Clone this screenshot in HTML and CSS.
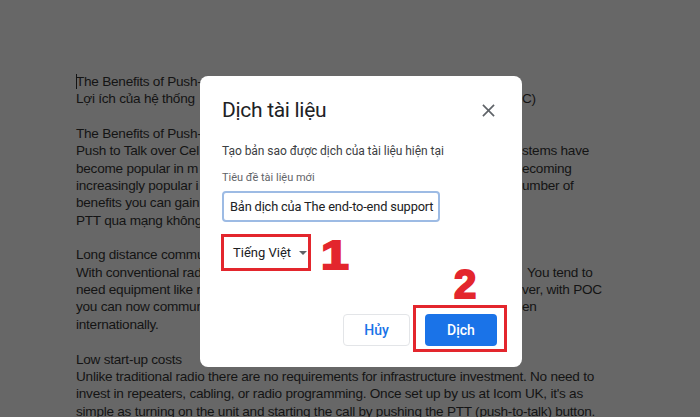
FILE: index.html
```html
<!DOCTYPE html>
<html lang="vi">
<head>
<meta charset="utf-8">
<title>Dịch tài liệu</title>
<link rel="stylesheet" href="styles.css">
</head>
<body>
<div class="page">
  <div class="doc">
    <div class="line"><span class="lt"><span class="caret"></span>The Benefits of Push-</span></div>
    <div class="line"><span class="lt">Lợi ích của hệ thống</span><span class="rt">C)</span></div>
    <div class="line"></div>
    <div class="line"><span class="lt">The Benefits of Push-</span></div>
    <div class="line"><span class="lt">Push to Talk over Cel</span><span class="rt">stems have</span></div>
    <div class="line"><span class="lt">become popular in m</span><span class="rt">ecoming</span></div>
    <div class="line"><span class="lt">increasingly popular i</span><span class="rt">umber of</span></div>
    <div class="line"><span class="lt">benefits you can gain</span></div>
    <div class="line"><span class="lt">PTT qua mạng không</span></div>
    <div class="line"></div>
    <div class="line"><span class="lt">Long distance commu</span></div>
    <div class="line"><span class="lt">With conventional rad</span><span class="rt"><span class="sp5">You tend to</span></span></div>
    <div class="line"><span class="lt">need equipment like r</span><span class="rt">ver, with POC</span></div>
    <div class="line"><span class="lt">you can now commun</span><span class="rt">en</span></div>
    <div class="line"><span class="lt">internationally.</span></div>
    <div class="line"></div>
    <div class="line">Low start-up costs</div>
    <div class="line">Unlike traditional radio there are no requirements for infrastructure investment. No need to</div>
    <div class="line">invest in repeaters, cabling, or radio programming. Once set up by us at Icom UK, it's as</div>
    <div class="line">simple as turning on the unit and starting the call by pushing the PTT (push-to-talk) button.</div>
  </div>

  <div class="dialog">
    <div class="dlg-head">
      <h1 class="dlg-title">Dịch tài liệu</h1>
      <svg class="close" viewBox="0 0 14 14" width="13" height="13"><path d="M1 1 L13 13 M13 1 L1 13" stroke="#5f6368" stroke-width="1.8" fill="none"/></svg>
    </div>
    <p class="dlg-sub">Tạo bản sao được dịch của tài liệu hiện tại</p>
    <p class="dlg-label">Tiêu đề tài liệu mới</p>
    <div class="input">Bản dịch của The end-to-end support</div>
    <div class="lang">Tiếng Việt <span class="caret-down"></span></div>
    <div class="actions">
      <button class="btn btn-cancel">Hủy</button>
      <button class="btn btn-ok">Dịch</button>
    </div>
  </div>

  <div class="mark box1"></div>
  <div class="num num1">1</div>
  <div class="num num2">2</div>
  <div class="mark box2"></div>
</div>
</body>
</html>
```

FILE: styles.css
```css
* { box-sizing: border-box; }
html, body { margin: 0; padding: 0; }
body { background: #676767; width: 700px; height: 417px; overflow: hidden; }
.page { position: relative; width: 700px; height: 417px; }

.doc {
  padding: 73px 0 0 76px;
  font-family: "Liberation Sans", Arial, sans-serif;
  font-size: 13.6px;
  letter-spacing: -0.25px;
  line-height: 17.35px;
  color: #141414;
}
.line {
  height: 17.35px;
  white-space: nowrap;
  display: grid;
  grid-template-columns: 124px 322px auto;
}
.line:not(:has(.lt)) { display: block; }
.lt { grid-column: 1; }
.rt { grid-column: 3; }
.sp5 { display: inline-block; margin-left: 5px; }
.caret { display: inline-block; width: 1px; height: 15px; margin-right: -1px; background: #141414; vertical-align: -3px; }

.dialog {
  position: absolute;
  left: 200px; top: 76px;
  width: 322px; height: 291px;
  background: #fff;
  border-radius: 8px;
  padding: 20px 25px 0 22px;
  font-family: Roboto, "Noto Sans", sans-serif;
  color: #202124;
}
.dlg-head { display: flex; align-items: center; justify-content: space-between; height: 28px; }
.dlg-title { margin: 0; font-size: 21px; letter-spacing: -0.3px; font-weight: 400; line-height: 28px; color: #202124; }
.close { margin-right: 2px; }
.dlg-sub { margin: 19px 0 0; font-size: 12px; letter-spacing: -0.05px; line-height: 16px; color: #3c4043; }
.dlg-label { margin: 11px 0 0; font-size: 11px; line-height: 16px; color: #5f6368; }
.input {
  margin-top: 5px;
  width: 218px; height: 31px;
  border: 2px solid #9dbbe4;
  border-radius: 4px;
  padding: 0 0 0 6px;
  font-size: 12.8px; letter-spacing: -0.15px; line-height: 27px;
  white-space: nowrap;
  color: #202124;
}
.lang {
  margin-top: 20px;
  padding-left: 11px;
  font-size: 13px; line-height: 22px;
  display: flex; align-items: center; gap: 6px;
  color: #202124;
}
.caret-down { width: 0; height: 0; border-left: 4px solid transparent; border-right: 4px solid transparent; border-top: 4px solid #5f6368; margin-left: 2px; }
.actions { display: flex; justify-content: flex-end; gap: 15px; margin-top: 50px; }
.btn {
  height: 32px; border-radius: 4px;
  font-family: Roboto, "Noto Sans", sans-serif;
  font-size: 14px; font-weight: 500;
  padding: 0; cursor: pointer;
}
.btn-cancel { width: 67px; background: #fff; border: 1px solid #e3e5e8; color: #1a73e8; }
.btn-ok { width: 72px; background: #1a73e8; border: none; color: #fff; }

.mark { position: absolute; border: 3px solid #e3262d; }
.box1 { left: 221px; top: 234px; width: 90px; height: 37px; }
.box2 { left: 413px; top: 305px; width: 94px; height: 47px; }
.num {
  position: absolute;
  font-family: "Liberation Sans", Arial, sans-serif;
  font-weight: 700; font-size: 40px; line-height: 40px;
  color: #e3262d;
  -webkit-text-stroke: 2px #e3262d;
}
.num1 { left: 321px; top: 235px; transform: scaleX(1.25); transform-origin: left top; }
.num2 { left: 454px; top: 264px; }
```
